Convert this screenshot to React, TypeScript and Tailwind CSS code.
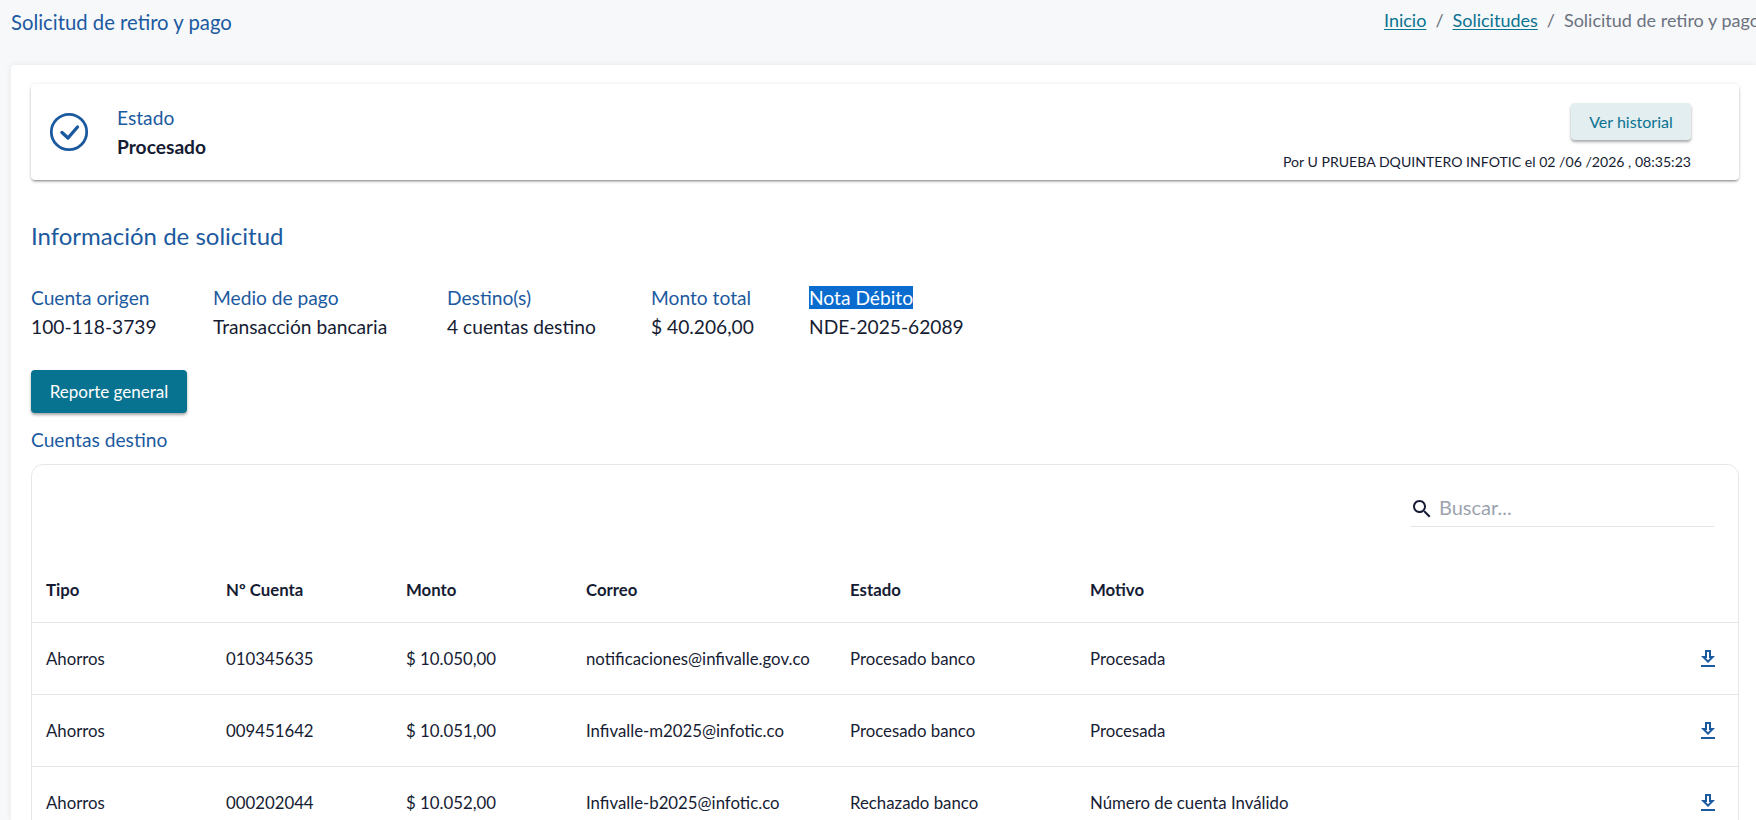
const rows = [
  { tipo: 'Ahorros', cuenta: '010345635', monto: '$ 10.050,00', correo: 'notificaciones@infivalle.gov.co', estado: 'Procesado banco', motivo: 'Procesada' },
  { tipo: 'Ahorros', cuenta: '009451642', monto: '$ 10.051,00', correo: 'Infivalle-m2025@infotic.co', estado: 'Procesado banco', motivo: 'Procesada' },
  { tipo: 'Ahorros', cuenta: '000202044', monto: '$ 10.052,00', correo: 'Infivalle-b2025@infotic.co', estado: 'Rechazado banco', motivo: 'Número de cuenta Inválido' },
];

const info = [
  { label: 'Cuenta origen', value: '100-118-3739' },
  { label: 'Medio de pago', value: 'Transacción bancaria' },
  { label: 'Destino(s)', value: '4 cuentas destino' },
  { label: 'Monto total', value: '$ 40.206,00' },
];

const DownloadIcon = () => (
  <svg viewBox="0 0 24 24" className="w-6 h-6 fill-[#1c5aa0]">
    <path d="M19 9h-4V3H9v6H5l7 7 7-7zm-8 2V5h2v6h1.17L12 13.17 9.83 11H11zm-6 7h14v2H5z" />
  </svg>
);

export default function App() {
  return (
    <div className="h-[820px] overflow-hidden bg-[#f7f8fa] font-['Lato',sans-serif] text-[#161c33]">
      {/* Header */}
      <div className="flex items-start justify-between h-[65px] pl-[11px]">
        <h1 className="text-[20.3px] leading-[24px] text-[#1c5aa0] mt-[10px]">Solicitud de retiro y pago</h1>
        <nav className="flex whitespace-nowrap w-[372px] text-[18px] leading-[24px] mt-[8px] text-[#6b7280]">
          <a className="text-[#0a7391] underline underline-offset-2 decoration-1">Inicio</a>
          <span className="mx-[9px]">/</span>
          <a className="text-[#0a7391] underline underline-offset-2 decoration-1">Solicitudes</a>
          <span className="mx-[9px]">/</span>
          <span>Solicitud de retiro y pago</span>
        </nav>
      </div>

      <div className="ml-[11px] bg-white rounded-tl-[4px] shadow-[0_0_6px_rgba(0,0,0,0.08)] pl-[20px] pr-[17px] pt-[19px] h-[755px]">
        {/* Estado */}
        <div className="flex justify-between h-[96px] rounded-[4px] bg-white shadow-[0_2px_3px_-1px_rgba(0,0,0,0.5),0_0_4px_rgba(0,0,0,0.08)] pl-[18px] pr-[48px]">
          <div className="flex items-center gap-[28px]">
            <svg viewBox="0 0 40 40" className="w-10 h-10 fill-none stroke-[#1c5aa0]">
              <circle cx="20" cy="20" r="17.7" strokeWidth="2.8" />
              <path d="M13 20.5l6 5.5 9.5-11" strokeWidth="3.4" strokeLinecap="round" strokeLinejoin="round" />
            </svg>
            <div className="pt-[1px]">
              <p className="text-[19.2px] leading-[24px] text-[#1c5aa0] mb-[5px]">Estado</p>
              <p className="text-[19.2px] leading-[24px] font-bold">Procesado</p>
            </div>
          </div>
          <div className="flex flex-col items-end pt-[19px]">
            <button className="w-[120px] h-[37px] rounded-[4px] bg-[#e3eef0] text-[#0a7391] text-[16px] shadow-[0_2px_3px_rgba(0,0,0,0.35)]">Ver historial</button>
            <p className="text-[14.1px] leading-[18px] mt-[13px]">Por U PRUEBA DQUINTERO INFOTIC el 02 /06 /2026 , 08:35:23</p>
          </div>
        </div>

        {/* Información */}
        <h2 className="text-[24px] leading-[30px] text-[#1c5aa0] mt-[41px]">Información de solicitud</h2>
        <div className="grid grid-cols-[182px_234px_204px_158px_auto] mt-[35px] text-[19.2px] leading-[24px]">
          {info.map(i => (
            <div key={i.label}>
              <p className="text-[#1c5aa0] mb-[5px]">{i.label}</p>
              <p>{i.value}</p>
            </div>
          ))}
          <div>
            <p className="mb-[5px]"><span className="bg-[#0a6ccf] text-white">Nota Débito</span></p>
            <p>NDE-2025-62089</p>
          </div>
        </div>

        <button className="block w-[156px] h-[43px] mt-[31px] rounded-[4px] bg-[#087391] text-white text-[17px] shadow-[0_2px_3px_rgba(0,0,0,0.35)]">Reporte general</button>
        <p className="text-[19.2px] leading-[24px] text-[#1c5aa0] mt-[15px]">Cuentas destino</p>

        {/* Tabla */}
        <div className="mt-[12px] border border-[#e5e7eb] rounded-[12px] h-[400px]">
          <div className="flex justify-end pr-[24px] pt-[26px] h-[61px]">
            <div className="flex items-center w-[304px] h-[36px] border-b border-[#e5e7eb]">
              <svg viewBox="0 0 24 24" className="w-6 h-6 fill-[#161c33]">
                <path d="M15.5 14h-.79l-.28-.27C15.41 12.59 16 11.11 16 9.5 16 5.91 13.09 3 9.5 3S3 5.91 3 9.5 5.91 16 9.5 16c1.61 0 3.09-.59 4.23-1.57l.27.28v.79l5 4.99L20.49 19l-4.99-5zm-6 0C7.01 14 5 11.99 5 9.5S7.01 5 9.5 5 14 7.01 14 9.5 11.99 14 9.5 14z" />
              </svg>
              <span className="ml-[5px] pb-[4px] text-[20px] text-[#9ca3af]">Buscar...</span>
            </div>
          </div>
          <table className="w-full table-fixed text-[16.8px] text-left">
            <colgroup>
              <col className="w-[180px]" />
              <col className="w-[180px]" />
              <col className="w-[180px]" />
              <col className="w-[264px]" />
              <col className="w-[240px]" />
              <col />
              <col className="w-[56px]" />
            </colgroup>
            <thead>
              <tr className="h-[96px]">
                {['Tipo', 'Nº Cuenta', 'Monto', 'Correo', 'Estado', 'Motivo', ''].map(h => (
                  <th key={h} className="pl-[14px] pt-[31px] font-bold border-b border-[#e5e7eb]">{h}</th>
                ))}
              </tr>
            </thead>
            <tbody>
              {rows.map(r => (
                <tr key={r.cuenta} className="h-[72px]">
                  <td className="pl-[14px] pt-[2px] border-b border-[#e5e7eb]">{r.tipo}</td>
                  <td className="pl-[14px] pt-[2px] border-b border-[#e5e7eb]">{r.cuenta}</td>
                  <td className="pl-[14px] pt-[2px] border-b border-[#e5e7eb]">{r.monto}</td>
                  <td className="pl-[14px] pt-[2px] border-b border-[#e5e7eb]">{r.correo}</td>
                  <td className="pl-[14px] pt-[2px] border-b border-[#e5e7eb]">{r.estado}</td>
                  <td className="pl-[14px] pt-[2px] border-b border-[#e5e7eb]">{r.motivo}</td>
                  <td className="pl-[14px] pt-[2px] border-b border-[#e5e7eb]"><DownloadIcon /></td>
                </tr>
              ))}
            </tbody>
          </table>
        </div>
      </div>
    </div>
  );
}
